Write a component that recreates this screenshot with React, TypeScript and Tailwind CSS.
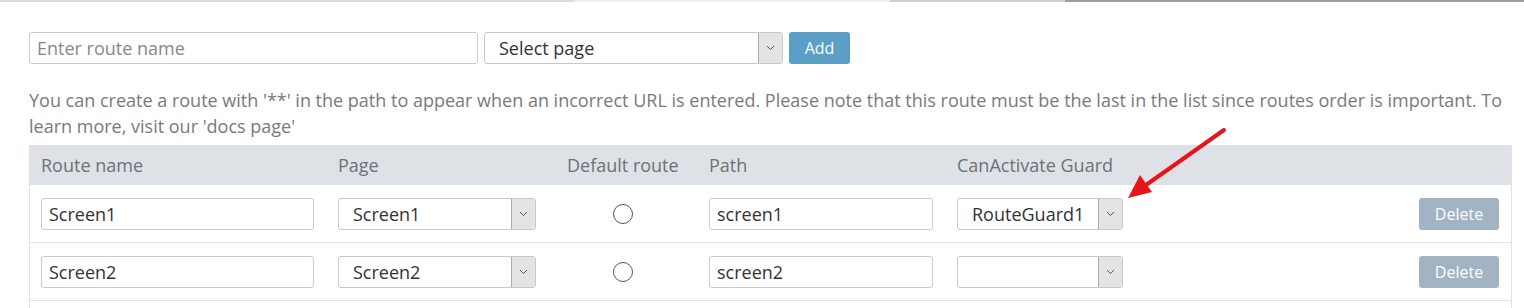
import React from "react";

const font = { fontFamily: '"Open Sans", "Liberation Sans", sans-serif' };

function Chevron() {
  return (
    <svg width="9" height="6" viewBox="0 0 9 6" fill="none">
      <path d="M1 1l3.5 3.5L8 1" stroke="#555" strokeWidth="1" />
    </svg>
  );
}

function Select({ value, className }: { value: string; className: string }) {
  return (
    <div className={`flex h-8 items-stretch rounded-[3px] border border-[#c8c8c8] bg-white ${className}`}>
      <div className="flex flex-1 items-center pl-[14px] text-[18px] text-[#333]">{value}</div>
      <div className="flex w-[24px] items-center justify-center rounded-r-[2px] border-l border-[#aaa] bg-[#e4e4e4]">
        <Chevron />
      </div>
    </div>
  );
}

function TextInput({ value, placeholder, className }: { value?: string; placeholder?: string; className: string }) {
  return (
    <div
      className={`flex h-8 items-center rounded-[3px] border border-[#ccc] bg-white pl-[7px] text-[18px] ${
        value ? "text-[#333]" : "text-[#888]"
      } ${className}`}
    >
      {value || placeholder}
    </div>
  );
}

const routes = [
  { name: "Screen1", page: "Screen1", path: "screen1", guard: "RouteGuard1" },
  { name: "Screen2", page: "Screen2", path: "screen2", guard: "" },
];

export default function App() {
  return (
    <div className="relative h-[308px] w-[1524px] overflow-hidden bg-white" style={font}>
      {/* top edge */}
      <div className="flex h-[2px] w-full">
        <div className="w-[575px] bg-[#dcdcdc]" />
        <div className="w-[315px] bg-[#efefef]" />
        <div className="w-[175px] bg-[#d0d0d0]" />
        <div className="flex-1 bg-[#9c9c9c]" />
      </div>

      <div className="ml-[29px] w-[1483px] pt-[30px]">
        <div className="flex gap-[6px]">
          <TextInput placeholder="Enter route name" className="w-[449px]" />
          <Select value="Select page" className="w-[299px]" />
          <button className="h-8 w-[61px] rounded-[3px] bg-[#5b9ec6] text-[16px] text-white">Add</button>
        </div>

        <p className="mt-[23px] text-[18px] leading-[26px] text-[#7a7a7a]">
          You can create a route with '**' in the path to appear when an incorrect URL is entered. Please note that this
          route must be the last in the list since routes order is important. To learn more, visit our 'docs page'
        </p>

        <div className="mt-[6px] border-r border-[#e3e3e3]">
          <div className="grid h-[40px] grid-cols-[297px_229px_142px_248px_1fr] items-center bg-[#dee2e6] pl-[12px] text-[18px] text-[#6b7278]">
            <div>Route name</div>
            <div>Page</div>
            <div>Default route</div>
            <div>Path</div>
            <div>CanActivate Guard</div>
          </div>
          {routes.map((r) => (
            <div
              key={r.name}
              className="grid grid-cols-[297px_229px_142px_248px_1fr_auto] items-center border-b border-l border-[#e3e3e3] pb-[12px] pl-[11px] pr-[12px] pt-[13px]"
            >
              <TextInput value={r.name} className="w-[273px]" />
              <Select value={r.page} className="w-[198px]" />
              <div className="flex w-[112px] justify-center">
                <div className="h-[20px] w-[20px] rounded-full border border-[#555] bg-white" />
              </div>
              <TextInput value={r.path} className="w-[224px]" />
              <Select value={r.guard} className="w-[166px]" />
              <button className="h-8 w-[80px] rounded-[3px] bg-[#a2b3c3] text-[16px] text-white">Delete</button>
            </div>
          ))}
          <div className="h-[10px] border-l border-[#e3e3e3]" />
        </div>
      </div>

      {/* annotation arrow */}
      <svg className="pointer-events-none absolute left-[1120px] top-[125px]" width="112" height="80" viewBox="0 0 112 80">
        <line x1="104" y1="5" x2="26" y2="60" stroke="#e8141b" strokeWidth="4" strokeLinecap="round" />
        <polygon points="8,73 20,50 32,67" fill="#e8141b" />
      </svg>
    </div>
  );
}
